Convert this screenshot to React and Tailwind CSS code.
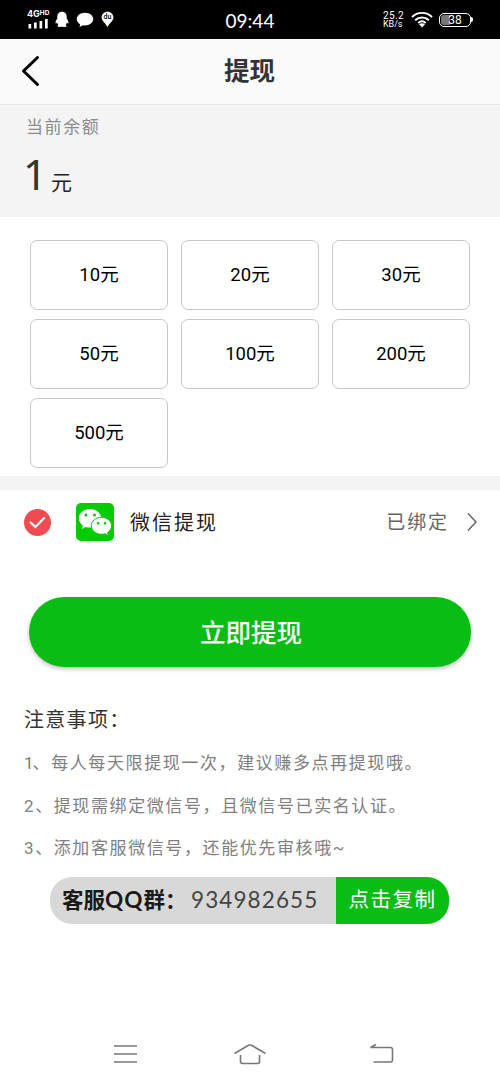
import { useState } from 'react'

const amounts = [10, 20, 30, 50, 100, 200, 500]

const notices = [
  { no: '1', text: '每人每天限提现一次，建议赚多点再提现哦。' },
  { no: '2', text: '提现需绑定微信号，且微信号已实名认证。' },
  { no: '3', text: '添加客服微信号，还能优先审核哦~' },
]

function StatusBar() {
  return (
    <div className="h-[39px] bg-black text-white flex items-center justify-between pl-[27px] pr-[27px]">
      <div className="flex items-center w-[140px]">
        {/* Signal */}
        <div className="w-[22px] flex flex-col">
          <div className="flex items-start text-[9px] leading-[8px] font-bold whitespace-nowrap font-[Inter]">
            4G<span className="text-[6.5px] leading-[6px]">HD</span>
          </div>
          <svg className="mt-[1px]" width="22" height="10" viewBox="0 0 22 10" fill="currentColor">
            <rect x="1.500" y="5" width="2.700" height="4.500" />
            <rect x="7" y="3.500" width="2.700" height="6" />
            <rect x="12.500" y="2" width="2.700" height="7.500" />
            <rect x="18" y="0" width="2.700" height="9.500" />
          </svg>
        </div>
        {/* QQ */}
        <svg className="ml-[6px]" width="14" height="17" viewBox="0 0 14 17" fill="currentColor">
          <path d="M7 .8C4 .8 2.300 3 2.300 5.800L2.200 7.700C1.200 9 .4 10.700.5 12c.1.800.700.600 1.500-.4.2.9.7 1.700 1.400 2.300-.7.3-1.100.8-1 1.400.2.800 3.600.700 4.600.1 1 .6 4.400.7 4.600-.1.1-.6-.3-1.100-1-1.400.7-.6 1.200-1.400 1.400-2.300.8 1 1.400 1.200 1.500.4.1-1.300-.7-3-1.700-4.300l-.1-1.900C11.700 3 10 .8 7 .8z" />
        </svg>
        {/* Chat bubble */}
        <svg className="ml-[7px]" width="18" height="16" viewBox="0 0 17 16" preserveAspectRatio="none" fill="currentColor">
          <path d="M8.500.7C4.200.7.7 3.500.7 7.100c0 2.200 1.300 4.100 3.200 5.200L3.300 15l3.400-1.700c4.900.9 9.600-1.800 9.600-6.200C16.300 3.500 12.800.7 8.500.7z" />
        </svg>
        {/* Map pin */}
        <div className="relative ml-[7px] w-[13px] h-[17px]">
          <svg width="13" height="17" viewBox="0 0 13 17" fill="currentColor">
            <path d="M6.500.8C3.300.8.6 3.300.6 6.400c0 3.600 4.200 5.600 5.900 9.600 1.700-4 5.900-6 5.900-9.600C12.400 3.300 9.700.8 6.500.8z" />
          </svg>
          <span className="absolute inset-x-0 top-[2px] text-center text-[7px] leading-[8px] font-medium text-black">du</span>
        </div>
      </div>

      <div className="text-[19px] leading-[24px] mt-[3px] font-[Lato]">09:44</div>

      <div className="flex items-center justify-end w-[140px]">
        <div className="text-[10px] leading-[9px] tracking-[0.4px] text-left">
          <div>25.2</div>
          <div className="text-[9px] leading-[9px] tracking-[0]">KB/s</div>
        </div>
        <svg className="ml-[7px]" width="22" height="17" viewBox="0 0 22 17" fill="none" stroke="currentColor" strokeWidth="1.900">
          <path d="M1 6C6.500.5 15.500.5 21 6" />
          <path d="M4.200 9.200c3.800-3.600 9.800-3.600 13.600 0" />
          <path d="M7.300 12c2.200-2 5.200-2 7.400 0" />
          <path d="M8 13.300c1.800-1.400 4.200-1.400 6 0L11 16.400z" fill="currentColor" stroke="none" />
        </svg>
        <div className="ml-[6px] relative w-[32px] h-[14px] rounded-[5px] border-[1.500px] border-white flex items-center justify-center">
          <div className="absolute left-px top-px bottom-px w-[9px] rounded-l-[3px] bg-[#777]" />
          <span className="relative text-[12px] leading-[12px]">38</span>
        </div>
        <div className="w-[2px] h-[5px] bg-white rounded-r" />
      </div>
    </div>
  )
}

function WechatIcon() {
  return (
    <svg width="38" height="38" viewBox="0 0 38 38">
      <rect width="38" height="38" rx="5" fill="#04cb04" />
      <path d="M14 6C7.700 6 2.800 10.100 2.800 15.300c0 2.900 1.600 5.500 4.100 7.200L5.800 26l4.100-2.100c1.300.4 2.700.6 4.100.6 6.300 0 11.200-4.100 11.200-9.200S20.300 6 14 6z" fill="#fff" />
      <path d="M25.500 14.300c-5.700 0-10.200 3.800-10.200 8.500s4.500 8.500 10.200 8.500c1.300 0 2.500-.2 3.600-.5l3.400 1.900-.9-3.200c2.500-1.500 4-3.900 4-6.700 0-4.700-4.500-8.500-10.100-8.500z" fill="#fff" stroke="#04cb04" strokeWidth="1" />
      <g fill="#04cb04">
        <circle cx="10" cy="12" r="1.500" />
        <circle cx="18.500" cy="12" r="1.500" />
        <circle cx="22" cy="20.300" r="1.200" />
        <circle cx="29" cy="20.300" r="1.200" />
      </g>
    </svg>
  )
}

export default function App() {
  const [checked, setChecked] = useState(true)

  return (
    <div className="w-[500px] h-[1083px] bg-white flex flex-col overflow-hidden font-[Roboto,'Noto_Sans_CJK_SC',sans-serif] text-[#222]">
      <StatusBar />

      {/* Header */}
      <div className="h-[66px] bg-[#fafafa] border-b border-[#e6e6e6] grid grid-cols-[60px_1fr_60px] items-center">
        <button className="pl-[20px] pb-[2px]">
          <svg width="20" height="32" viewBox="0 0 20 32" fill="none" stroke="#000" strokeWidth="3" strokeLinecap="round" strokeLinejoin="round">
            <path d="M17.500 2.500L3.500 16l14 13.500" />
          </svg>
        </button>
        <h1 className="text-center text-[25.500px] leading-[36px] font-bold text-[#333] pr-px pb-px">提现</h1>
      </div>

      {/* Balance */}
      <div className="h-[112px] bg-[#f4f4f4] pl-[26px]">
        <div className="pt-[10px] text-[17px] leading-[24px] tracking-[1.600px] text-[#8c8c8c]">当前余额</div>
        <div className="mt-[10px] flex items-baseline text-[#222]">
          <span className="text-[42px] leading-[50px] font-[Noto_Sans] w-[23px] -ml-[3px] text-[#333]">1</span>
          <span className="ml-[5px] text-[21px]">元</span>
        </div>
      </div>

      {/* Amounts */}
      <div className="h-[259px] pt-[23px] px-[30px] grid grid-cols-3 auto-rows-[70px] gap-x-[13px] gap-y-[9px] content-start">
        {amounts.map((amount) => (
          <button
            key={amount}
            className="rounded-[7px] border-[1.500px] border-[#c8c8c8] text-[18.500px] text-black pt-px"
          >
            {amount}元
          </button>
        ))}
      </div>
      <div className="h-[14px] bg-[#f4f4f4]" />

      {/* Pay method */}
      <div className="h-[64px] flex items-center pl-[24px] pr-[22px]">
        <button
          onClick={() => setChecked(!checked)}
          className="w-[27px] h-[27px] rounded-full bg-[#f04b50] flex items-center justify-center"
        >
          {checked && (
            <svg width="17" height="13" viewBox="0 0 17 13" fill="none" stroke="#fff" strokeWidth="2.200" strokeLinecap="round" strokeLinejoin="round">
              <path d="M1.700 6.500l4.800 4.600 8.600-9" />
            </svg>
          )}
        </button>
        <div className="ml-[25px]">
          <WechatIcon />
        </div>
        <span className="ml-[16px] mt-[2px] text-[20px] tracking-[2px] text-[#222]">微信提现</span>
        <span className="ml-auto mt-[2px] text-[19px] tracking-[1.900px] text-[#666]">已绑定</span>
        <svg className="ml-[17px]" width="12" height="20" viewBox="0 0 12 20" fill="none" stroke="#666" strokeWidth="1.500">
          <path d="M2 1.500l8 8.500-8 8.500" />
        </svg>
      </div>

      <button className="mt-[43px] mx-[29px] h-[70px] shrink-0 rounded-full bg-[#0abd14] text-white text-[25.500px] font-medium pt-[2px] pl-[2px] shadow-[0_2px_4px_rgba(0,0,0,0.25)]">
        立即提现
      </button>

      {/* Notices */}
      <div className="mt-[37px] pl-[24px]">
        <div className="text-[20px] leading-[32px] tracking-[1.300px] text-[#333]">注意事项：</div>
        <div className="mt-[6px] text-[17px] leading-[42.500px] tracking-[1.600px] text-[#808080] whitespace-nowrap">
          {notices.map(({ no, text }) => (
            <p key={no}>
              <span className={no === '1' ? 'tracking-[-1px]' : ''}>{no}</span>、{text}
            </p>
          ))}
        </div>
      </div>

      {/* QQ group */}
      <div className="mt-[7px] ml-[50px] w-[399px] h-[47px] flex rounded-[22px] overflow-hidden bg-[#d8d8d8]">
        <div className="flex-1 flex items-center pl-[12px] whitespace-nowrap">
          <span className="w-[129px] text-[21.500px] font-bold text-[#1a1a1a]">
            客服<span className="font-[Lato] text-[22.500px] tracking-[1px]">QQ</span>群：
          </span>
          <span className="font-[Lato] text-[22.500px] tracking-[1.100px] text-[#444]">934982655</span>
        </div>
        <button className="w-[113px] bg-[#0abd14] text-white text-[20.500px] tracking-[1.500px] pt-px">点击复制</button>
      </div>

      {/* Navigation bar */}
      <div className="mt-auto h-[58px] flex items-center">
        <svg className="ml-[113px]" width="25" height="20" viewBox="0 0 25 20" fill="none" stroke="#777" strokeWidth="1.600">
          <path d="M1 2h23M1 10h23M1 18h23" />
        </svg>
        <svg className="ml-[95px]" width="34" height="22" viewBox="0 0 34 22" fill="none" stroke="#777" strokeWidth="1.600">
          <path d="M1.500 10.500L15.500 2.300q1.500-.7 3 0L32.500 10.500" />
          <path d="M7.500 12v6.500q0 2 2 2h15q2 0 2-2V12" />
        </svg>
        <svg className="ml-[101px]" width="26" height="22" viewBox="0 0 26 22" fill="none" stroke="#777" strokeWidth="1.600">
          <path d="M8 1.500L2.500 4.500h20q2 0 2 2v10.500q0 2-2 2H5.500" />
        </svg>
      </div>
    </div>
  )
}
